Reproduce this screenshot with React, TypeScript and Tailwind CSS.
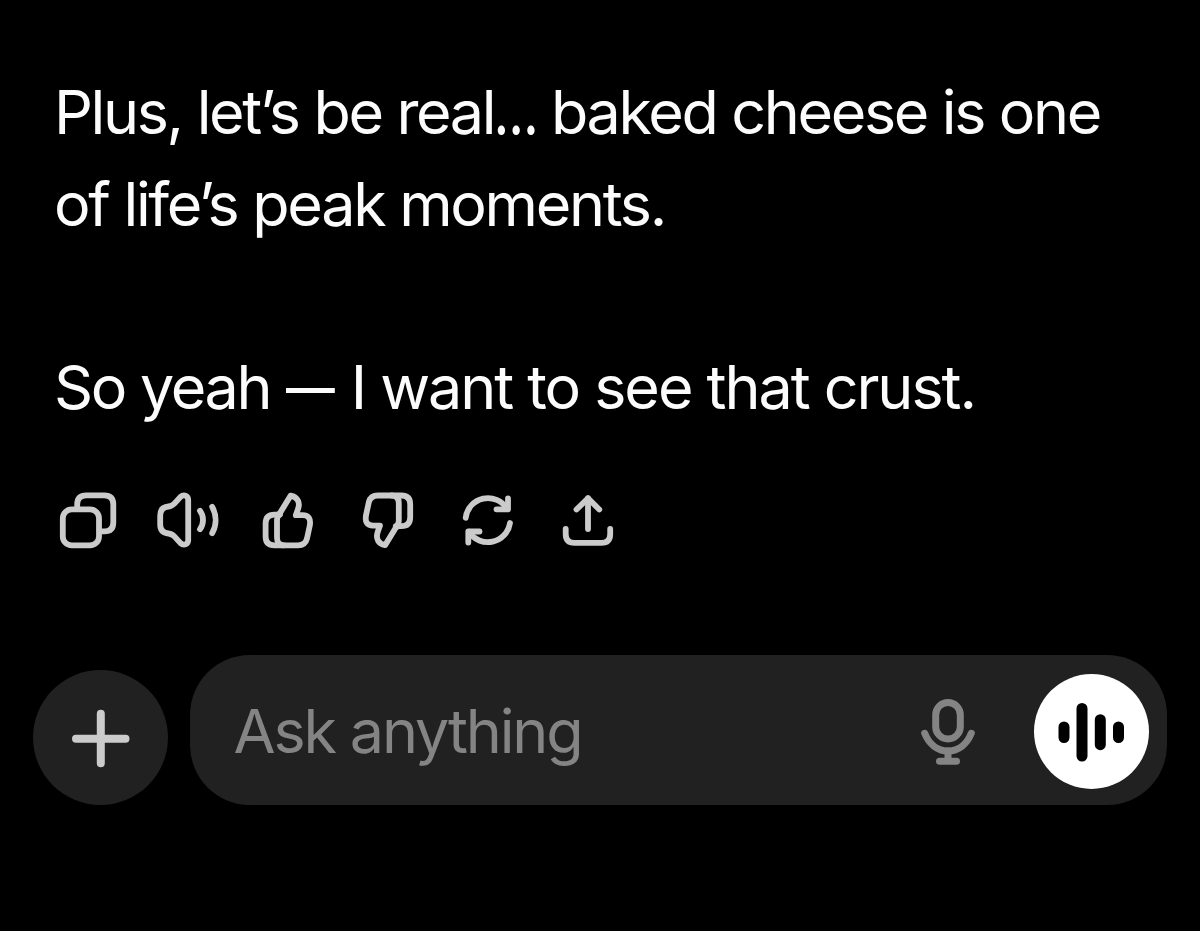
import React from 'react';

interface IconProps {
    children: React.ReactNode;
    label: string;
}

function ActionIcon({ children, label }: IconProps) {
    return (
        <button aria-label={label} className="size-16 shrink-0 text-[#cbcbcb]">
            <svg
                viewBox="0 0 64 64"
                className="size-16"
                fill="none"
                stroke="currentColor"
                strokeWidth={5.8}
                strokeLinecap="round"
                strokeLinejoin="round"
            >
                {children}
            </svg>
        </button>
    );
}

function ThumbPath() {
    return (
        <>
            <path d="M34.7 7.6 L24.5 24.2 Q23 26.6 20.2 26.6 H18.5 Q9.6 26.6 9.6 35.5 V48.5 Q9.6 57.3 18.5 57.3 H42 Q49.3 57.3 51 50.5 L53.7 38 Q55.8 27.2 46.5 27.2 H39.8 L42.2 20.5 C44.4 13.5 41 9 34.7 7.6 Z" />
            <path d="M24 26.6 Q21 28 21 32 V49.5 Q21 57.3 28 57.3" />
        </>
    );
}

export default function App() {
    return (
        <div className="flex h-[931px] w-[1200px] flex-col overflow-hidden bg-black font-['Inter',sans-serif]">
            <div className="pl-[54px] pt-[67px] text-[61px] leading-[91.5px] tracking-[-2.3px] whitespace-nowrap text-[#fcfcfc]">
                <p>
                    <span className="block tracking-[-2.35px]">
                        Plus, let’s be real
                        <span className="-mr-[14px] inline-block origin-left scale-x-[0.76] font-semibold">…</span> baked cheese is one
                    </span>
                    <span className="block">of life’s peak moments.</span>
                </p>
                <p className="mt-[91.5px]">
                    So yeah <span className="-mr-[10px] ml-px inline-block origin-left scale-x-[0.8]">—</span>{' '}
                    <span className="ml-px tracking-[-2.05px]">I want to see that crust.</span>
                </p>
            </div>

            <div className="mt-[55px] flex gap-9 pl-14">
                <ActionIcon label="Copy">
                    <rect x="6.8" y="21.4" width="36.2" height="36" rx="9" />
                    <path d="M21.2 18.5 V16.5 Q21.2 7.4 30.3 7.4 H48.2 Q57.3 7.4 57.3 16.5 V34.5 Q57.3 43.4 48.2 43.4 H46" />
                </ActionIcon>
                <ActionIcon label="Read aloud">
                    <path d="M24.5 8.9 L18.6 15.4 Q16 18.2 12.5 18.5 Q4.2 19.3 4.2 27.5 V36.5 Q4.2 44.7 12.5 45.5 Q16 45.8 18.6 48.6 L24.5 55.1 Q27.2 57.6 30.2 56 Q32.2 54.7 32.2 52 V12 Q32.2 9.3 30.2 8 Q27.2 6.4 24.5 8.9 Z" />
                    <path d="M44 22.8 C48 28 48 36 44 41.2" />
                    <path d="M56.2 18.8 C60.7 27 60.7 37 56.2 45.2" />
                </ActionIcon>
                <ActionIcon label="Good response">
                    <ThumbPath />
                </ActionIcon>
                <ActionIcon label="Bad response">
                    <g transform="rotate(180 31.9 32.4)">
                        <ThumbPath />
                    </g>
                </ActionIcon>
                <ActionIcon label="Regenerate">
                    <path d="M9.7 29.8 A22.4 22.4 0 0 1 51 20.7" />
                    <path d="M52 10.5 V21.3 H40.5" />
                    <path d="M54 35 A22.4 22.4 0 0 1 13 43.9" />
                    <path d="M12.3 54.6 V43.5 H23.5" />
                </ActionIcon>
                <ActionIcon label="Share">
                    <path d="M32 10.2 V41" />
                    <path d="M20.5 21.5 L32 10.2 L43.3 21.5" />
                    <path d="M9.7 40.8 V46 Q9.7 54.9 18.6 54.9 H45.4 Q54.2 54.9 54.2 46 V40.8" />
                </ActionIcon>
            </div>

            <div className="mt-[103px] flex items-end pl-[33px]">
                <button aria-label="Add" className="flex size-[135px] items-center justify-center rounded-full bg-[#212121]">
                    <svg viewBox="0 0 60 60" className="size-[60px]" stroke="#cbcbcb" strokeWidth={8} strokeLinecap="round">
                        <path d="M29.8 5.8 V55.2 M5 30.8 H54.5" />
                    </svg>
                </button>
                <div className="ml-[22px] flex h-[150px] w-[977px] items-center rounded-[60px] bg-[#212121] pl-[43.5px] pr-[18px]">
                    <span className="mt-[3px] flex-1 text-[61px] leading-[91.5px] tracking-[-2.15px] whitespace-nowrap text-[#848484]">
                        Ask anything
                    </span>
                    <svg
                        viewBox="0 0 56 68"
                        className="mr-[58px] mt-1 h-[68px] w-14"
                        fill="none"
                        stroke="#848484"
                        strokeWidth={7}
                        strokeLinecap="round"
                    >
                        <rect x="15.7" y="4.5" width="24.6" height="36.5" rx="12.3" />
                        <path d="M4.7 35.3 C9 46 17.5 53 28 53 C38.5 53 47 46 51.3 35.3" />
                        <path d="M28 53 V62" />
                        <path d="M19.5 63.3 H36.5" />
                    </svg>
                    <button
                        aria-label="Voice mode"
                        className="mt-[3px] flex size-[115px] items-center justify-center rounded-full bg-white"
                    >
                        <svg viewBox="0 0 70 60" className="h-[60px] w-[70px]" stroke="#000000" strokeWidth={11} strokeLinecap="round">
                            <path d="M7 25 V35.5 M25 6.5 V54 M43.3 17.7 V42.7 M61.5 25 V35.5" />
                        </svg>
                    </button>
                </div>
            </div>
        </div>
    );
}
